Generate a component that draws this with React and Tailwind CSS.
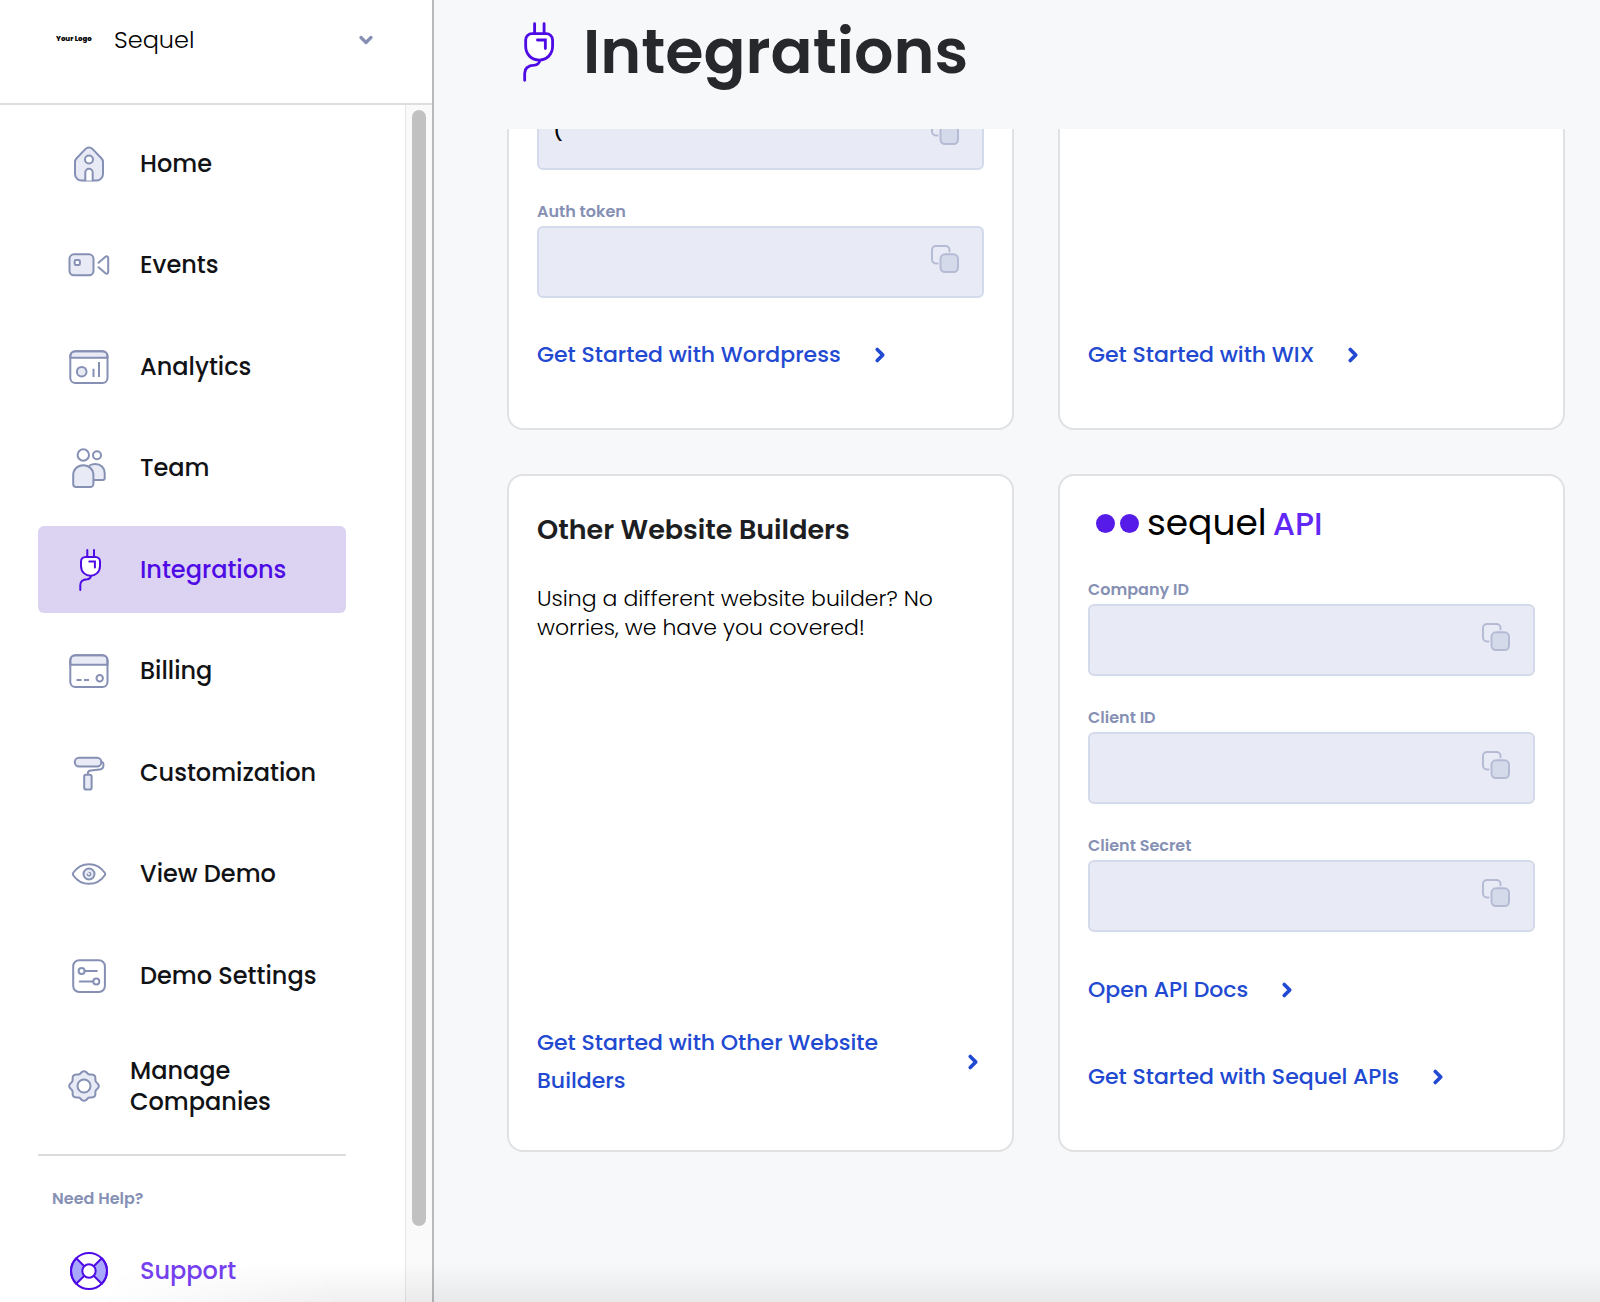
import { ChevronDown, ChevronRight } from 'lucide-react'

const HomeIcon = () => (
  <>
    <path className="fill-[#e8ebf5]" d="M24 7.5c1.3 0 2.5.5 3.4 1.4l9 9.3c1 1 1.6 2.3 1.6 3.7V34a6.5 6.5 0 0 1-6.5 6.5h-15A6.5 6.5 0 0 1 10 34V21.9c0-1.4.6-2.7 1.6-3.7l9-9.3A4.8 4.8 0 0 1 24 7.5z" />
    <circle className="fill-white" cx="24" cy="19.5" r="4" />
    <path className="fill-white" d="M20.3 40.5v-8a3.7 3.7 0 0 1 7.4 0v8" />
  </>
)

const EventsIcon = () => (
  <>
    <rect className="fill-[#e8ebf5]" x="4.5" y="13.3" width="24" height="21" rx="4.5" />
    <rect className="fill-white" x="9.7" y="18.9" width="5.2" height="5.2" rx="1.3" />
    <path d="M33.5 21.8l7-6c1.2-1 2.7-.4 2.7 1.2v14c0 1.6-1.5 2.2-2.7 1.2l-7-6" />
  </>
)

const AnalyticsIcon = () => (
  <>
    <path className="fill-[#e8ebf5]" d="M5.3 14.8v-1.6a5 5 0 0 1 5-5h27.2a5 5 0 0 1 5 5v1.6z" />
    <rect x="5.3" y="8.2" width="37.2" height="31.8" rx="5" />
    <circle className="fill-[#e8ebf5]" cx="16.7" cy="28.7" r="4.8" />
    <path strokeLinecap="butt" d="M28.5 25.7V34M34 19v15" />
  </>
)

const TeamIcon = () => (
  <>
    <circle cx="18.3" cy="11" r="5.7" />
    <circle cx="32" cy="11.3" r="4" />
    <path className="fill-[#e8ebf5]" d="M24.5 21.5c1.6-1 3.6-1.6 5.8-1.6 5.3 0 9.4 4 9.4 9.2v5a2 2 0 0 1-2 2h-9.5" />
    <path className="fill-[#e8ebf5]" d="M8.2 31.2c0-5.7 4.3-10 10.1-10s10.1 4.3 10.1 10V40a3 3 0 0 1-3 3H11.2a3 3 0 0 1-3-3z" />
  </>
)

const PlugIcon = () => (
  <>
    <path d="M22.3 4v7M29 4v7" />
    <path className="fill-white" d="M20.5 11h10a4.5 4.5 0 0 1 4.5 4.5v4.500c0 6-4.500 9.700-9.500 9.700S16 26 16 20v-4.500a4.500 4.500 0 0 1 4.500-4.500z" />
    <path strokeLinejoin="miter" d="M24.3 15.5h5.600v6" />
    <path d="M26 30c-.5 2-1.5 3.1-3.7 3.3-3.600.2-7 1.200-7 5.700v5" />
  </>
)

const BillingIcon = () => (
  <>
    <path className="fill-[#e8ebf5]" d="M5.3 17.8v-4.6a5 5 0 0 1 5-5h27.2a5 5 0 0 1 5 5v4.6z" />
    <rect x="5.3" y="8.2" width="37.2" height="31.8" rx="5" />
    <path strokeLinecap="butt" d="M11.5 33h5M19 33h5" />
    <circle cx="34.7" cy="31.3" r="3.2" />
  </>
)

const RollerIcon = () => (
  <>
    <rect className="fill-[#e8ebf5]" x="9.8" y="8.7" width="26.5" height="8.8" rx="4.3" />
    <path d="M36.5 12.6c1.2.3 1.9 1 1.9 2.3v1.6c0 2.6-1.3 3.7-3.8 4l-8.8.9c-2 .2-2.9 1-2.9 2.6v1.5" />
    <rect className="fill-[#e8ebf5]" x="19.2" y="25.8" width="7.4" height="14.8" rx="1.8" />
  </>
)

const EyeIcon = () => (
  <>
    <path d="M8.2 25.2a2 2 0 0 1 0-2.4C12 17.3 17.5 14.2 24 14.2s12 3.1 15.8 8.6a2 2 0 0 1 0 2.4C36 30.7 30.5 33.8 24 33.8S12 30.7 8.2 25.2z" />
    <circle className="fill-[#e8ebf5]" cx="24" cy="24" r="5.5" />
    <path d="M24.2 22.4a1.7 1.7 0 1 1-1.8 1.8" strokeWidth="1.4" />
  </>
)

const SlidersIcon = () => (
  <>
    <rect x="8.2" y="8.3" width="31.7" height="31.7" rx="6" />
    <circle cx="16.6" cy="18.9" r="3" />
    <path d="M20 18.9h11.8M14.8 29.6h13" />
    <circle cx="31.3" cy="29.6" r="3" />
  </>
)

// Eight soft teeth around the rim
const GEAR = Array.from({ length: 96 }, (_, i) => {
  const a = (i / 96) * Math.PI * 2
  const r = 13.7 + 1.1 * Math.cos(8 * a)
  return `${(24 + r * Math.cos(a)).toFixed(2)},${(24 + r * Math.sin(a)).toFixed(2)}`
}).join(' ')

const GearIcon = () => (
  <>
    <polygon className="fill-[#e8ebf5]" points={GEAR} />
    <circle className="fill-white" cx="24" cy="24" r="6.5" />
  </>
)

const SupportIcon = () => (
  <>
    <path className="fill-[#a8a8ff]" d="M11.3 11.3a18 18 0 0 0 0 25.4L24 24zM36.7 11.3a18 18 0 0 1 0 25.4L24 24z" />
    <circle cx="24" cy="24" r="18" />
    <circle className="fill-white" cx="24" cy="24" r="6.7" />
  </>
)

const NAV_ITEMS = [
  { label: 'Home', icon: HomeIcon },
  { label: 'Events', icon: EventsIcon },
  { label: 'Analytics', icon: AnalyticsIcon },
  { label: 'Team', icon: TeamIcon },
  { label: 'Integrations', icon: PlugIcon, active: true },
  { label: 'Billing', icon: BillingIcon },
  { label: 'Customization', icon: RollerIcon },
  { label: 'View Demo', icon: EyeIcon },
  { label: 'Demo Settings', icon: SlidersIcon },
]

function Icon({ icon: Shape, className }) {
  return (
    <svg
      viewBox="0 0 48 48"
      className={className}
      fill="none"
      stroke="currentColor"
      strokeWidth="2"
      strokeLinecap="round"
      strokeLinejoin="round"
      aria-hidden="true"
    >
      <Shape />
    </svg>
  )
}

function Sidebar() {
  return (
    <aside className="flex w-[434px] shrink-0 flex-col border-r-2 border-[#b9babd] bg-white">
      <button className="flex h-[105px] shrink-0 items-center border-b-2 border-[#dedede] pr-14 pb-6 pl-14 text-left">
        <span className="w-[58px] text-[7px] font-extrabold text-black">Your Logo</span>
        <span className="flex-1 text-2xl font-light text-black">Sequel</span>
        <ChevronDown className="h-5 w-5 text-[#8690b4]" strokeWidth={4} />
      </button>

      <div className="flex min-h-0 flex-1">
        <nav className="flex-1 overflow-hidden pt-[15px] pr-[59px] pl-[38px] text-2xl font-medium text-[#111215]">
          <ul className="flex h-[899px] flex-col justify-between">
            {NAV_ITEMS.map(item => (
              <li key={item.label}>
                <a
                  href="#"
                  className={
                    item.active
                      ? 'flex h-[87px] items-center gap-[27px] rounded-md bg-[#dbd3f1] pl-[27px] text-[#4f0be6]'
                      : 'flex h-[87px] items-center gap-[27px] pl-[27px]'
                  }
                >
                  <Icon
                    icon={item.icon}
                    className={item.active ? 'h-12 w-12 shrink-0' : 'h-12 w-12 shrink-0 text-[#8690b4]'}
                  />
                  {item.label}
                </a>
              </li>
            ))}
          </ul>

          <a href="#" className="mt-[14px] flex h-[106px] items-center gap-[22px] pl-[22px] leading-[31px]">
            <Icon icon={GearIcon} className="h-12 w-12 shrink-0 text-[#8690b4]" />
            <span className="w-40">Manage Companies</span>
          </a>

          <div className="mt-[15px] border-t-2 border-[#dcdcdc] pt-[31px]">
            <p className="pl-[14px] text-base leading-6 font-semibold text-[#8690b4]">Need Help?</p>
            <a href="#" className="mt-4 flex h-[87px] items-center gap-[27px] pl-[27px] text-[#7540ef]">
              <Icon icon={SupportIcon} className="h-12 w-12 shrink-0 text-[#4f0be6]" />
              Support
            </a>
          </div>
        </nav>

        {/* Scroll track */}
        <div className="w-[27px] border-l border-[#e6e6e6] bg-[#fafafa] px-1.5 pt-[5px]">
          <div className="h-[1116px] w-[14px] rounded-full bg-[#c1c1c1]" />
        </div>
      </div>
    </aside>
  )
}

function CopyIcon() {
  return (
    <svg viewBox="0 0 28 28" className="h-7 w-7" fill="none" stroke="#b5bbd5" strokeWidth="2" strokeLinecap="round">
      <path d="M6.5 18.5H5a4 4 0 0 1-4-4V5a4 4 0 0 1 4-4h9.5a4 4 0 0 1 4 4v1.5" />
      <rect x="9.5" y="9.3" width="17.5" height="17.7" rx="4.5" fill="#d5daea" />
    </svg>
  )
}

function Field({ id, label, value = '' }) {
  return (
    <div className="mb-[30px]">
      {label && (
        <label htmlFor={id} className="mb-0.5 block text-base leading-6 font-semibold text-[#8690b4]">
          {label}
        </label>
      )}
      <div className="flex h-[72px] rounded-md border-2 border-[#d3daea] bg-[#e8ebf5] pr-[23px] pl-[14px]">
        <input
          id={id}
          aria-label={label || 'API key'}
          readOnly
          value={value}
          className="min-w-0 flex-1 bg-transparent pb-2 text-xl font-medium text-black outline-none"
        />
        <button aria-label="Copy" className="pb-1.5">
          <CopyIcon />
        </button>
      </div>
    </div>
  )
}

function CardLink({ children }) {
  return (
    <a href="#" className="flex items-center justify-between gap-7 self-start text-[22px] leading-[38px] font-medium text-[#2149d1]">
      {children}
      <ChevronRight className="h-[22px] w-[22px] shrink-0" strokeWidth={4} />
    </a>
  )
}

function Card({ children, className }) {
  return (
    <section className={`flex flex-col rounded-2xl border-2 border-[#e0e1e3] bg-white px-7 pb-[50px] ${className}`}>
      {children}
    </section>
  )
}

export default function App() {
  return (
    <div className="relative flex h-screen overflow-hidden bg-[#f7f8fa] font-[Poppins,Inter,sans-serif]">
      <Sidebar />

      <main className="flex min-w-0 flex-1 flex-col">
        <header className="flex h-[129px] shrink-0 items-center gap-3 pb-[26px] pl-[69px]">
          <Icon icon={PlugIcon} className="h-[68px] w-[68px] text-[#4f0be6]" />
          <h1 className="text-[62px] leading-none font-semibold text-[#27282c]">Integrations</h1>
        </header>

        <div className="min-h-0 flex-1 overflow-hidden pr-[35px] pl-[73px]">
          {/* List is scrolled: the first row runs up under the header */}
          <div className="-mt-[31px] grid grid-cols-2 gap-11">
            <Card className="rounded-t-none border-t-0">
              <Field id="api-key" value="(" />
              <Field id="auth-token" label="Auth token" />
              <div className="mt-2 flex flex-col pb-1">
                <CardLink>Get Started with Wordpress</CardLink>
              </div>
            </Card>

            <Card className="justify-end rounded-t-none border-t-0">
              <div className="flex flex-col pb-1">
                <CardLink>Get Started with WIX</CardLink>
              </div>
            </Card>

            <Card className="justify-between pt-[34px]">
              <div>
                <h2 className="text-[27px] leading-10 font-semibold text-[#1d1e22]">Other Website Builders</h2>
                <p className="mt-[34px] text-[22px] leading-[29px] font-light text-black">
                  Using a different website builder? No worries, we have you covered!
                </p>
              </div>
              <CardLink>Get Started with Other Website Builders</CardLink>
            </Card>

            <Card className="pt-5">
              <div className="mb-7 flex h-[54px] items-center pl-2">
                <span className="mr-[5px] h-[19px] w-[19px] rounded-full bg-[#561be8]" />
                <span className="mr-2 h-[19px] w-[19px] rounded-full bg-[#561be8]" />
                <span className="flex items-baseline gap-1.5 leading-none">
                  <span className="text-[36px] text-black">sequel</span>
                  <span className="text-[32px] font-medium text-[#6128f5]">API</span>
                </span>
              </div>
              <Field id="company-id" label="Company ID" />
              <Field id="client-id" label="Client ID" />
              <Field id="client-secret" label="Client Secret" />
              <div className="mt-[9px] flex flex-col gap-[49px] pb-1">
                <CardLink>Open API Docs</CardLink>
                <CardLink>Get Started with Sequel APIs</CardLink>
              </div>
            </Card>
          </div>
        </div>
      </main>

      {/* Shade along the bottom edge */}
      <div className="pointer-events-none absolute inset-x-0 bottom-0 h-10 bg-linear-to-t from-black/6 to-transparent [mask-image:linear-gradient(to_right,transparent_100px,black_340px)]" />
    </div>
  )
}
